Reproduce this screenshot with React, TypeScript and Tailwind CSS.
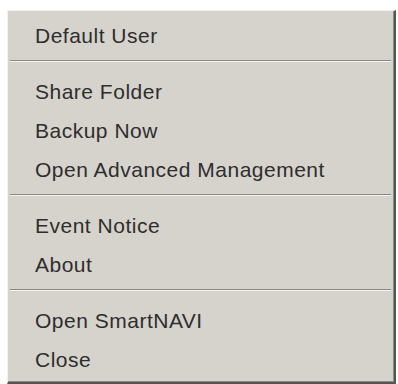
import React from "react";

function Item({ label }: { label: string }) {
  return (
    <div className="h-[39px] flex items-center pl-[27px] text-[21px] tracking-[0.5px] text-[#2e2e2e]">
      {label}
    </div>
  );
}

function Sep() {
  return (
    <div className="h-[17px] flex flex-col pt-[5px] px-[2px]">
      <div className="h-px bg-[#8a8884]" />
      <div className="h-px bg-[#f4f3f0]" />
    </div>
  );
}

export default function App() {
  return (
    <div className="w-[398px] h-[384px] bg-white pl-[7px] pt-[10px]" style={{ fontFamily: '"Liberation Sans", Arial, sans-serif' }}>
      <div className="w-[389px] h-[374px] bg-[#d6d3cc] border-t-[1px] border-l-[1px] border-r-[2px] border-b-[2px] border-t-[#f2f1ee] border-l-[#f2f1ee] border-r-[#555452] border-b-[#555452]">
        <div className="h-full border-r border-b border-r-[#8d8b86] border-b-[#8d8b86] pt-[5px]">
          <Item label="Default User" />
          <Sep />
          <Item label="Share Folder" />
          <Item label="Backup Now" />
          <Item label="Open Advanced Management" />
          <Sep />
          <Item label="Event Notice" />
          <Item label="About" />
          <Sep />
          <Item label="Open SmartNAVI" />
          <Item label="Close" />
        </div>
      </div>
    </div>
  );
}
